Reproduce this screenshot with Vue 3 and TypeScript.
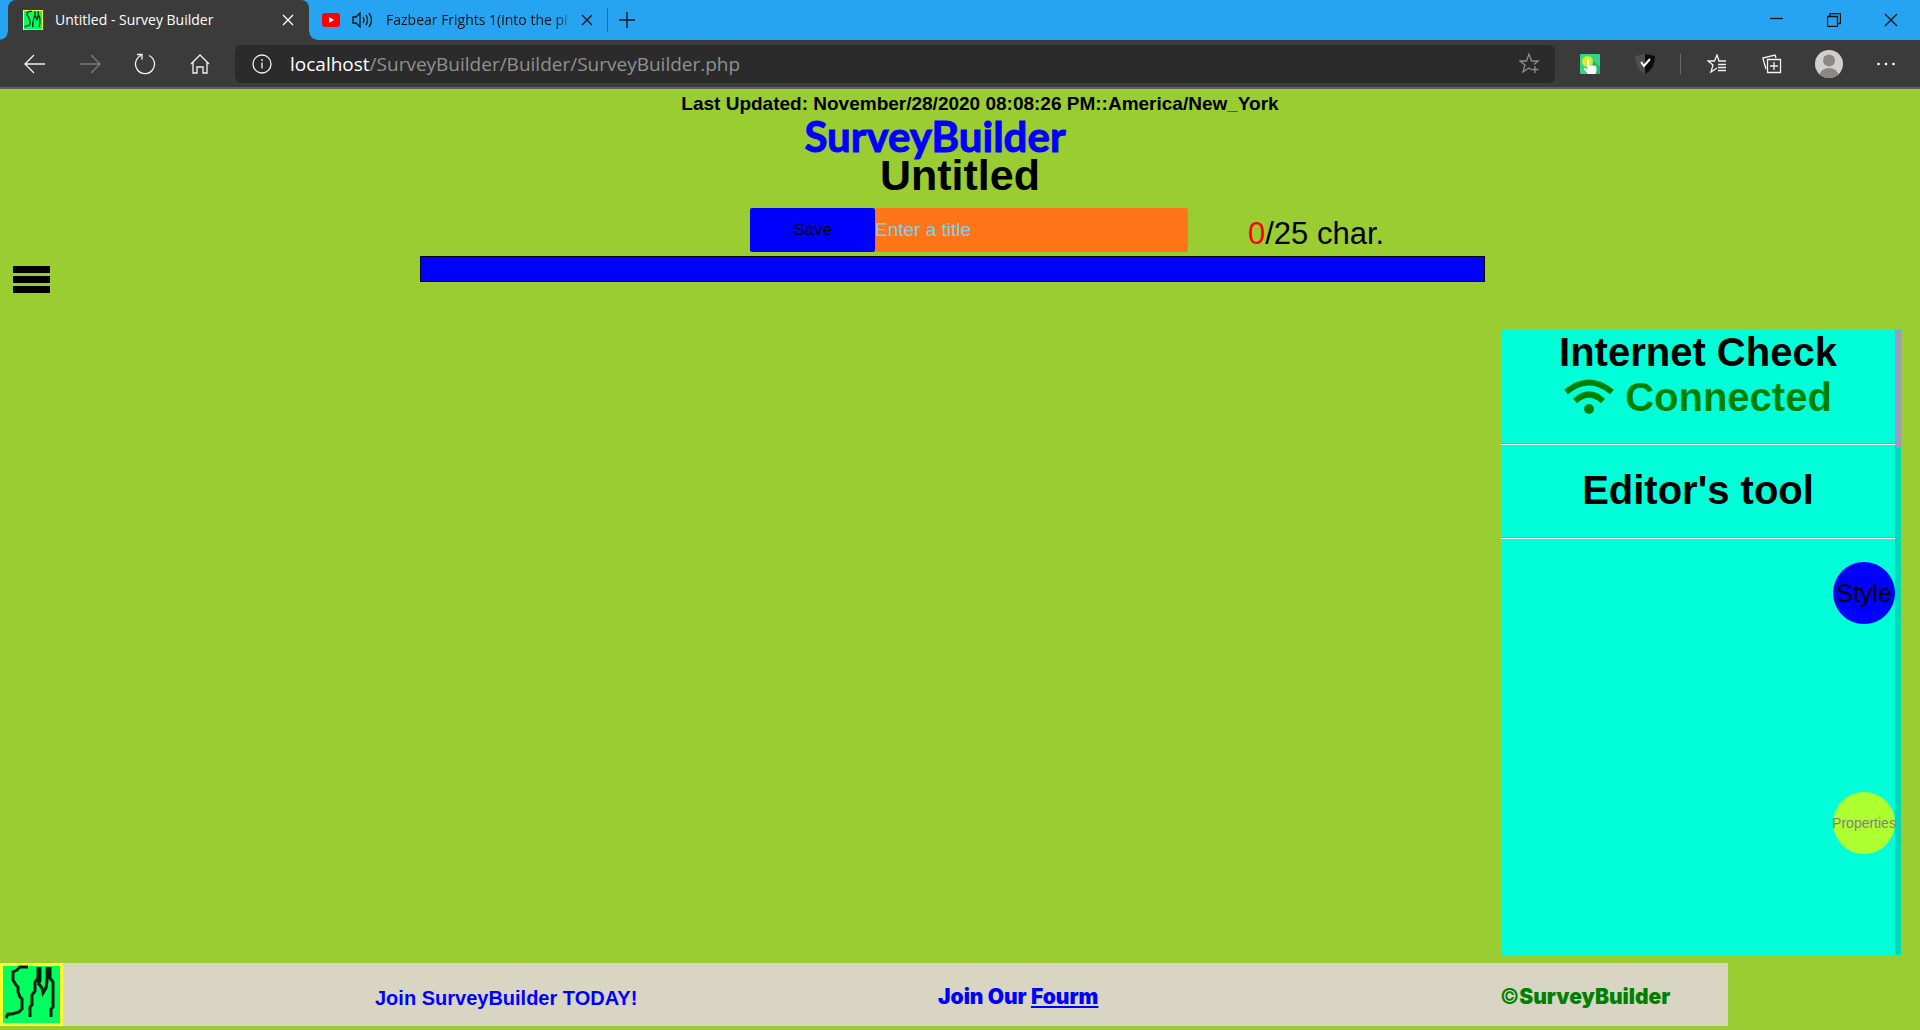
<script setup lang="ts">
import { computed, ref } from 'vue'

const title = ref('')
const maxChars = 25
const count = computed(() => title.value.length)
const url = { host: 'localhost', path: '/SurveyBuilder/Builder/SurveyBuilder.php' }
</script>

<template>
  <div class="window">
    <header class="browser">
      <div class="tabs">
        <div class="tab active">
          <svg class="favicon" viewBox="0 0 63 63" preserveAspectRatio="none" aria-hidden="true">
            <rect width="63" height="63" fill="#ffff30" /><rect x="3" y="3" width="57" height="58" fill="#00ff5f" />
            <path d="M28 4H20L13 9V17L18 24L22 34V44L18 49L8 51L6 55M31 54V42L34 26L38 17V4M38 16L44 30L48 20V4M49 16L53 24V44L51 54" fill="none" stroke="#04200c" stroke-width="4" />
          </svg>
          <span class="tab-name">Untitled - Survey Builder</span>
          <button class="tab-close" aria-label="Close tab"><svg width="12" height="12" viewBox="0 0 12 12"><path d="M1 1l10 10M11 1L1 11" /></svg></button>
        </div>
        <div class="tab idle">
          <svg width="18" height="14" viewBox="0 0 18 14" aria-hidden="true"><rect width="18" height="14" rx="3" fill="#f00" /><path d="M7 4l5 3-5 3z" fill="#fff" /></svg>
          <svg class="line" width="21" height="18" viewBox="0 0 21 18" aria-hidden="true"><path d="M1 6h3l4-4v14l-4-4H1zM11 6q2 3 0 6M14 4q3 5 0 10M17 2q5 7 0 14" /></svg>
          <span class="tab-name faded">Fazbear Frights 1(into the pi</span>
          <button class="tab-close" aria-label="Close tab"><svg width="12" height="12" viewBox="0 0 12 12"><path d="M1 1l10 10M11 1L1 11" /></svg></button>
        </div>
        <button class="new-tab" aria-label="New tab"><svg width="16" height="16" viewBox="0 0 16 16"><path d="M8 0v16M0 8h16" /></svg></button>
        <div class="controls">
          <button aria-label="Minimize"><svg width="14" height="14" viewBox="0 0 14 14"><path d="M0 5.500h13" /></svg></button>
          <button aria-label="Restore"><svg width="14" height="14" viewBox="0 0 14 14"><path d="M.5 3.500h10v10H.5zM3 3V.5h10.500v10H11" /></svg></button>
          <button aria-label="Close"><svg width="14" height="14" viewBox="0 0 14 14"><path d="M1 1l12 12M13 1L1 13" /></svg></button>
        </div>
      </div>

      <div class="toolbar">
        <button aria-label="Back"><svg width="22" height="20" viewBox="0 0 22 20"><path d="M21 10H1M10 1l-9 9 9 9" /></svg></button>
        <button class="dim" aria-label="Forward"><svg width="22" height="20" viewBox="0 0 22 20"><path d="M1 10h20M12 1l9 9-9 9" /></svg></button>
        <button aria-label="Reload"><svg width="22" height="22" viewBox="0 0 22 22"><path d="M15 2.500A9.500 9.500 0 1 1 7 2.500M3 1.500h5v5" /></svg></button>
        <button aria-label="Home"><svg width="20" height="20" viewBox="0 0 20 20"><path d="M1 10l9-9 9 9M3 8v11h4v-6h6v6h4V8" /></svg></button>
        <div class="address">
          <svg width="20" height="20" viewBox="0 0 20 20" aria-hidden="true"><circle cx="10" cy="10" r="9" /><path d="M10 8.500v6M10 5v2" /></svg>
          <span class="url"><b>{{ url.host }}</b>{{ url.path }}</span>
          <svg class="star" width="22" height="22" viewBox="0 0 22 22" aria-hidden="true"><path d="M12 16.500l-2-1.500-6 4 2-7-5-4h6.500L10 1l2.500 7H19l-4 3.500M16 13v7M12.500 16.500h7" /></svg>
        </div>
        <button class="first" aria-label="Click extension">
          <svg class="solid" width="20" height="20" viewBox="0 0 20 20"><rect width="20" height="20" rx="1" fill="#34d584" /><path d="M12 5l8 8v7h-9z" fill="#23b96d" /><circle cx="7.500" cy="7.500" r="5.500" fill="#d8ea27" /><path d="M7 6q1-1.500 2 0v6l1-1 1.500 1 1-1 1.500 1.200 1.500-.7 1 2v3l-1 3.500H8L4 15.500q-.5-2 1-1.500l2 1.500z" fill="#fff" /></svg>
        </button>
        <button aria-label="Shield extension">
          <svg class="solid" width="20" height="20" viewBox="0 0 20 20"><path d="M10 0L0 2q0 13 10 18z" fill="#4e4e4e" /><path d="M10 0l10 2q0 13-10 18z" fill="#0c0c0c" /><path d="M6 8l3 4 6-7" fill="none" stroke="#fff" stroke-width="2" /></svg>
        </button>
        <i class="divider"></i>
        <button aria-label="Favorites"><svg width="20" height="20" viewBox="0 0 20 20"><path d="M10 14l-6 4 2-7-5-4h6.500L10 1l2 6h7M11 10.500h8M11 13.500h8M11 16.500h8" /></svg></button>
        <button aria-label="Collections"><svg width="20" height="20" viewBox="0 0 20 20"><path d="M5.500 5.500h13v13h-13zM12 8v8M8 12h8M4 15L.8 4 13 1l1 3" /></svg></button>
        <button class="wide" aria-label="Profile"><svg class="solid" width="28" height="28" viewBox="0 0 28 28"><defs><clipPath id="face"><circle cx="14" cy="14" r="14" /></clipPath></defs><g clip-path="url(#face)"><rect width="28" height="28" fill="#d2d0ce" /><circle cx="14" cy="10.500" r="6" fill="#8a8886" /><ellipse cx="14" cy="26" rx="9.500" ry="8" fill="#8a8886" /></g></svg></button>
        <button aria-label="More"><svg class="solid" width="18" height="4" viewBox="0 0 18 4"><g fill="#fff"><circle cx="1.500" cy="2" r="1.300" /><circle cx="9" cy="2" r="1.300" /><circle cx="16.500" cy="2" r="1.300" /></g></svg></button>
      </div>
    </header>

    <section class="heading">
      <p class="updated">Last Updated: November/28/2020 08:08:26 PM::America/New_York</p>
      <p class="brand">SurveyBuilder</p>
      <h1>Untitled</h1>
    </section>

    <form class="title-form" @submit.prevent>
      <div class="field">
        <button type="submit">Save</button>
        <input v-model="title" type="text" :maxlength="maxChars" placeholder="Enter a title" aria-label="Survey title" />
      </div>
      <p class="counter"><span>{{ count }}</span>/{{ maxChars }} char.</p>
    </form>

    <div class="strip">
      <button class="menu" aria-label="Open menu"><i></i><i></i><i></i></button>
      <div class="bar"></div>
    </div>

    <main>
      <aside class="panel">
        <div class="panel-body">
          <h2>Internet Check</h2>
          <h2 class="online">
            <svg width="50" height="38" viewBox="0 0 50 38" aria-hidden="true"><path d="M2 13Q25-6 48 13M11 22Q25 9 39 22" fill="none" stroke="#008000" stroke-width="6" /><circle cx="25" cy="30" r="5" fill="#008000" /></svg>
            <span>Connected</span>
          </h2>
          <hr />
          <h2 class="tool">Editor's tool</h2>
          <hr />
          <div class="rounds">
            <button class="style">Style</button>
            <button class="props" disabled>Properties</button>
          </div>
        </div>
        <div class="track"><div class="thumb"></div></div>
      </aside>
    </main>

    <footer>
      <svg class="logo" viewBox="0 0 63 63" role="img" aria-label="SurveyBuilder logo">
        <rect width="63" height="63" fill="#ffff30" /><rect x="3" y="3" width="57" height="57" fill="#00ff5f" />
        <path d="M28 4H20L17 7L13 9V17L16 22L18 24V29L20 34L22 36V46L19 49L12 51L8 51L6 55M30 54V44L32 42V32L35 28V19L38 15V4M40 4V18M38 20L42 25L43 30L46 25L47 18V4M50 4V15L53 19V44L51 46V54" fill="none" stroke="#04200c" stroke-width="3" />
        <path d="M39 4v16M49 4v12" stroke="#04200c" stroke-width="4" />
      </svg>
      <a class="join" href="#join">Join SurveyBuilder TODAY!</a>
      <p class="forum">Join Our <a href="#forum">Fourm</a></p>
      <p class="copy"><span>©</span>SurveyBuilder</p>
    </footer>
  </div>
</template>

<style>
body { margin: 0; background: #9acd32; }
</style>

<style scoped>
.window { display: flex; flex-direction: column; min-height: 100vh; box-sizing: border-box; padding-bottom: 4px; background: #9acd32; font-family: "Liberation Sans", Arial, sans-serif; color: #000; }
p, h1, h2 { margin: 0; }
button { border: 0; padding: 0; background: none; color: inherit; font-family: inherit; }

.browser { font-family: "Segoe UI", "Open Sans", sans-serif; }
.browser svg { flex: none; display: block; fill: none; stroke: currentColor; stroke-width: 1.3; }
.browser svg.solid, .browser svg.favicon, .browser .idle > svg:first-child { stroke: none; }
.tabs { display: flex; align-items: center; height: 40px; padding-left: 8px; background: #26a4f2; color: #111; }
.tab { display: flex; align-items: center; box-sizing: border-box; height: 40px; font-size: 14px; line-height: 20px; }
.active { position: relative; width: 301px; padding: 0 15px; border-radius: 8px 8px 0 0; background: #3b3b3b; color: #fff; }
.active::before, .active::after { content: ""; position: absolute; bottom: 0; width: 8px; height: 8px; }
.active::before { left: -8px; background: radial-gradient(circle at 0 0, transparent 7px, #3b3b3b 8px); }
.active::after { right: -8px; background: radial-gradient(circle at 100% 0, transparent 7px, #3b3b3b 8px); }
.favicon { width: 20px; height: 20px; margin-right: 12px; }
.tab-name { flex: 1; overflow: hidden; white-space: nowrap; }
.idle { width: 298px; padding: 0 14px 0 13px; gap: 12px; }
.idle .line { margin-right: 1px; }
.idle .faded { margin-right: -8px; -webkit-mask-image: linear-gradient(90deg, #000 88%, transparent); mask-image: linear-gradient(90deg, #000 88%, transparent); }
.new-tab { display: flex; align-items: center; height: 24px; padding-left: 11px; border-left: 1px solid #17699c; }
.controls { display: flex; gap: 43px; margin-left: auto; padding-right: 22px; }

.toolbar { display: flex; align-items: center; height: 47px; padding: 0 7px; background: #3b3b3b; border-bottom: 2px solid #616161; color: #f2f2f2; }
.toolbar > button { flex: none; display: flex; align-items: center; justify-content: center; width: 55px; height: 38px; }
.toolbar .dim { color: #7b7b7b; }
.address { flex: 1; display: flex; align-items: center; box-sizing: border-box; height: 38px; margin-left: 8px; padding: 0 14px 0 17px; border-radius: 6px; background: #2b2b2b; }
.url { flex: 1; margin-left: 18px; font-size: 19px; line-height: 26px; color: #919191; }
.url b { font-weight: 400; color: #fff; }
.star { color: #8c8c8c; }
.toolbar .first { margin-left: 7px; }
.toolbar .wide { width: 59px; }
.divider { width: 1px; height: 20px; margin: 0 8px; background: #6a6a6a; }

.heading { padding-top: 3px; text-align: center; }
.updated { padding-left: 40px; font-size: 19px; line-height: 24px; font-weight: 700; }
.brand { padding-right: 50px; font-family: "Comic Sans MS", Lato, sans-serif; font-size: 42px; line-height: 40px; font-weight: 700; color: #00f; -webkit-text-stroke: 1px #00f; stroke-linejoin: round; }
h1 { font-size: 43px; line-height: 38px; }

.title-form { display: grid; grid-template-columns: 1fr 438px 1fr; margin-top: 14px; padding-left: 18px; }
.field { grid-column: 2; display: flex; height: 44px; }
.field button { width: 125px; border-radius: 2px; background: #00f; font-size: 17px; }
.field input { flex: 1; min-width: 0; border: 0; padding: 0; border-radius: 2px; background: #ff7518; font: 19px "Liberation Sans", Arial, sans-serif; }
.field input::placeholder { color: #87ceeb; opacity: 1; }
.counter { padding: 8px 0 0 60px; font-size: 31px; line-height: 35px; }
.counter span { color: #f00; }

.strip { display: grid; grid-template-columns: 420fr 1065fr 435fr; margin-top: 4px; }
.menu { display: flex; flex-direction: column; gap: 3px; width: 37px; margin: 10px 0 0 13px; }
.menu i { width: 37px; height: 7px; background: #000; }
.bar { box-sizing: border-box; height: 26px; border: 1px solid #000; background: #00f; }

main { flex: 1; display: flex; justify-content: flex-end; padding: 37px 19px 8px; }
.panel { display: flex; width: 400px; background: #00ffd9; }
.panel-body { flex: 1; }
h2 { font-size: 40px; line-height: 45px; text-align: center; }
.online { display: flex; justify-content: center; align-items: center; gap: 11px; margin-bottom: 23px; color: #008000; }
hr { height: 1px; margin: 0; border: 0; border-top: 1px solid #9a9a9a; background: #fff; }
.tool { padding: 23px 0 24px; }
.rounds { display: flex; flex-direction: column; align-items: flex-end; gap: 168px; padding-top: 23px; }
.rounds button { width: 62px; height: 62px; border-radius: 50%; white-space: nowrap; display: flex; align-items: center; justify-content: center; }
.style { background: #00f; font-size: 25px; }
.props { background: #adff2f; color: #808080; font-size: 14px; }
.track { width: 6px; border-radius: 0 0 3px 3px; background: #00d8b8; }
.thumb { height: 118px; border-radius: 3px; background: #9d9abb; }

footer { display: grid; grid-template-columns: 375fr 563fr 562fr 228fr; align-items: center; width: 90%; height: 63px; background: #d8d6c2; font-size: 20px; line-height: 24px; font-weight: 700; white-space: nowrap; }
.logo { width: 63px; height: 63px; }
.join { padding-top: 6px; color: #00f; text-decoration: none; }
.forum, .copy { padding-top: 4px; font-family: "Arial Black", Inter, sans-serif; font-size: 21px; font-weight: 900; }
.forum { color: #00f; }
.forum a { color: inherit; }
.copy { color: #008000; }
.copy span { font-weight: 500; }
</style>
